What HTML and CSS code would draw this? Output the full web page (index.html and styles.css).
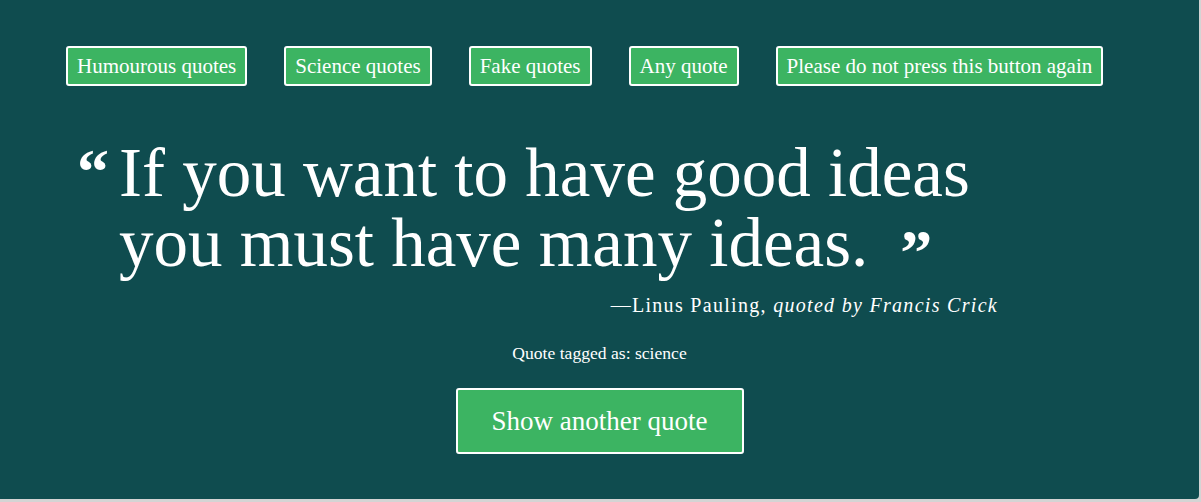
FILE: index.html
```html
<!DOCTYPE html>
<html>
<head>
<meta charset="utf-8">
<link rel="stylesheet" href="styles.css">
</head>
<body>
<div class="panel">
  <nav class="tags">
    <button class="tag">Humourous quotes</button>
    <button class="tag">Science quotes</button>
    <button class="tag">Fake quotes</button>
    <button class="tag">Any quote</button>
    <button class="tag">Please do not press this button again</button>
  </nav>
  <figure class="quote">
    <blockquote class="quote-body">
      <span class="mark open">&ldquo;</span>
      <p class="quote-text">If you want to have good ideas you must have many ideas.</p>
    </blockquote>
    <figcaption class="source">&mdash;Linus Pauling, <em>quoted by Francis Crick</em></figcaption>
  </figure>
  <p class="tagged">Quote tagged as: science</p>
  <div class="actions">
    <button class="another">Show another quote</button>
  </div>
</div>
</body>
</html>
```
FILE: styles.css
```css
html, body {
  margin: 0;
  padding: 0;
  background: #d4d4d4;
}
body {
  font-family: "Liberation Serif", "Times New Roman", serif;
  color: #fff;
}
.panel {
  width: 1199px;
  height: 499px;
  background: #0f4c4f;
  border-bottom-right-radius: 4px;
  box-sizing: border-box;
  padding-top: 46px;
}
.tags {
  display: flex;
  gap: 37px;
  padding-left: 66px;
}
.tag {
  font-family: inherit;
  font-size: 21px;
  color: #fff;
  background: #3cb462;
  border: 2px solid #fff;
  border-radius: 3px;
  height: 40px;
  padding: 0 9px;
  cursor: pointer;
}
.quote {
  margin: 52px 0 0 77px;
  width: 921px;
}
.quote-body {
  margin: 0;
  display: flex;
  align-items: flex-start;
}
.mark {
  font-size: 64px;
  font-weight: bold;
  line-height: 1;
}
.open {
  width: 42px;
  flex: none;
  margin-top: 2px;
}
.quote-text {
  margin: 0;
  font-size: 69px;
  line-height: 70px;
  max-width: 880px;
}
.quote-text::after {
  content: "\201D";
  display: inline-block;
  font-size: 64px;
  font-weight: bold;
  margin-left: 32px;
  vertical-align: top;
  line-height: normal;
  margin-top: 8px;
  margin-bottom: -14px;
}
.source {
  text-align: right;
  font-size: 20px;
  letter-spacing: 1.3px;
  margin-top: 16px;
}
.source em {
  font-style: italic;
}
.tagged {
  text-align: center;
  font-size: 17.6px;
  margin: 26px 0 0;
}
.actions {
  display: flex;
  justify-content: center;
  margin-top: 24px;
}
.another {
  font-family: inherit;
  font-size: 27px;
  color: #fff;
  background: #3cb462;
  border: 2px solid #fff;
  border-radius: 3px;
  width: 288px;
  height: 66px;
  cursor: pointer;
}
```
